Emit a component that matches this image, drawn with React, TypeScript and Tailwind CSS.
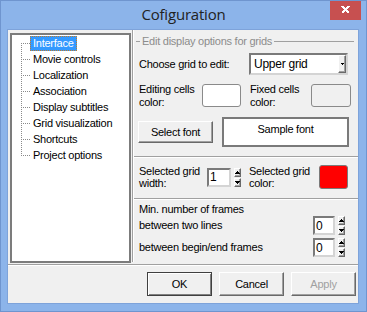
import React from "react";

const FONT = { fontFamily: '"Liberation Sans", Arial, sans-serif' };

const sunken =
  "border-2 border-t-[#7a7a7a] border-l-[#7a7a7a] border-b-[#d4d4d4] border-r-[#d4d4d4] bg-white";

const raised =
  "border border-t-white border-l-white border-b-[#696969] border-r-[#696969] shadow-[inset_-1px_-1px_0_#a0a0a0] bg-[#f0f0f0]";

function Groove() {
  return <div className="h-0 border-t border-b border-t-[#a0a0a0] border-b-white" />;
}

function Arrow({ up }: { up?: boolean }) {
  return (
    <svg width="5" height="3" viewBox="0 0 5 3" shapeRendering="crispEdges">
      {up ? (
        <>
          <rect x="2" y="0" width="1" height="1" fill="#000" />
          <rect x="1" y="1" width="3" height="1" fill="#000" />
          <rect x="0" y="2" width="5" height="1" fill="#000" />
        </>
      ) : (
        <>
          <rect x="0" y="0" width="5" height="1" fill="#000" />
          <rect x="1" y="1" width="3" height="1" fill="#000" />
          <rect x="2" y="2" width="1" height="1" fill="#000" />
        </>
      )}
    </svg>
  );
}

function Spin({ value, w }: { value: string; w: string }) {
  return (
    <div className="flex items-stretch h-[19px] gap-[3px]">
      <div className={`${sunken} ${w} flex items-center pl-[1px] text-[12px] leading-none text-black`}>{value}</div>
      <div className="flex flex-col w-[7px] gap-[1px]">
        <div className={`${raised} flex-1 flex items-center justify-center`}>
          <Arrow up />
        </div>
        <div className={`${raised} flex-1 flex items-center justify-center`}>
          <Arrow />
        </div>
      </div>
    </div>
  );
}

const treeItems = [
  "Interface",
  "Movie controls",
  "Localization",
  "Association",
  "Display subtitles",
  "Grid visualization",
  "Shortcuts",
  "Project options",
];

function TreeLines({ first, last }: { first?: boolean; last?: boolean }) {
  const dots: React.ReactNode[] = [];
  const y0 = first ? 8 : 0;
  const y1 = last ? 8 : 16;
  for (let y = y0; y <= y1; y += 2) {
    if (y < 16) dots.push(<rect key={"v" + y} x="8" y={y} width="1" height="1" fill="#8a8a8a" />);
  }
  for (let x = 10; x <= 16; x += 2) {
    dots.push(<rect key={"h" + x} x={x} y="8" width="1" height="1" fill="#8a8a8a" />);
  }
  return (
    <svg width="17" height="16" viewBox="0 0 17 16" shapeRendering="crispEdges" className="shrink-0">
      {dots}
    </svg>
  );
}

export default function App() {
  return (
    <div
      className="w-[367px] h-[312px] bg-[#8cb4ea] border border-[#6f95cf] flex flex-col text-[11px] tracking-[-0.25px] text-black overflow-hidden"
      style={FONT}
    >
      {/* title bar */}
      <div className="h-[28px] grid grid-cols-[1fr_auto_1fr] shrink-0">
        <div />
        <div
          className="text-[15px] tracking-[-0.2px] text-[#222] pt-[3px] leading-[20px]"
          style={{ fontFamily: '"Open Sans", "Noto Sans", sans-serif' }}
        >
          Cofiguration
        </div>
        <div className="flex justify-end pr-[5px]">
          <div className="w-[31px] h-[20px] -mt-[1px] bg-[#c75050] flex items-center justify-center">
            <svg width="9" height="8" viewBox="0 0 9 8" shapeRendering="crispEdges">
              <path d="M1 0 L8 7 M8 0 L1 7" stroke="#fff" strokeWidth="2" />
            </svg>
          </div>
        </div>
      </div>

      {/* client */}
      <div className="ml-[6px] w-[352px] h-[275px] border border-[#7ea3da] bg-[#f0f0f0] flex flex-col">
        {/* top section */}
        <div className="h-[234px] flex">
          {/* tree */}
          <div className="pl-[2px] pt-[3px]">
            <div className="w-[121px] h-[230px] border-2 border-[#7c7c7c] bg-white flex flex-col">
              {treeItems.map((t, i) => (
                <div key={t} className="h-[16px] flex items-center pl-[1px]">
                  <TreeLines first={i === 0} last={i === treeItems.length - 1} />
                  {i === 0 ? (
                    <div className="h-[15px] bg-[#3399ff] text-white border border-dotted border-[#c07a2a] px-[2px] flex items-center">
                      {t}
                    </div>
                  ) : (
                    <div className="h-[15px] px-[3px] flex items-center">{t}</div>
                  )}
                </div>
              ))}
            </div>
          </div>

          {/* right panel */}
          <div className="ml-[1px] h-[232px] flex-1 border-l-2 border-l-[#a0a0a0] flex flex-col">
            <div className="h-full border-l border-l-white -ml-[1px] flex flex-col">
              {/* header */}
              <div className="mt-[4px] h-[14px] flex items-center pr-[4px]">
                <div className="w-[4px] ml-[2px] h-0 border-t border-t-[#a0a0a0]" />
                <div className="px-[2px] text-[#8c8c8c]">Edit display options for grids</div>
                <div className="flex-1 h-0 border-t border-t-[#a0a0a0]" />
              </div>

              {/* choose grid */}
              <div className="mt-[5px] h-[22px] flex items-center pl-[5px]">
                <div className="w-[110px]">Choose grid to edit:</div>
                <div className={`${sunken} w-[99px] h-[22px] flex items-center justify-between`}>
                  <span className="pl-[3px] text-[12px]">Upper grid</span>
                  <div className={`${raised} w-[8px] h-full flex items-center justify-center`}>
                    <svg width="3" height="2" viewBox="0 0 3 2" shapeRendering="crispEdges">
                      <rect x="0" y="0" width="3" height="1" fill="#000" />
                      <rect x="1" y="1" width="1" height="1" fill="#000" />
                    </svg>
                  </div>
                </div>
              </div>

              {/* cells colour */}
              <div className="mt-[9px] h-[23px] flex items-center pl-[5px]">
                <div className="w-[63px] leading-[13px]">
                  Editing cells
                  <br />
                  color:
                </div>
                <div className="w-[39px] h-[23px] rounded-[3px] border border-[#8a8a8a] bg-white" />
                <div className="ml-[9px] w-[61px] leading-[13px]">
                  Fixed cells
                  <br />
                  color:
                </div>
                <div className="w-[40px] h-[23px] rounded-[3px] border border-[#8a8a8a] bg-[#f0f0f0]" />
              </div>

              {/* font */}
              <div className="mt-[10px] h-[30px] flex items-center pl-[4px]">
                <div className={`${raised} w-[75px] h-[22px] flex items-center justify-center`}>
                  Select font
                </div>
                <div className="ml-[9px] w-[127px] h-[30px] border-2 border-[#7a7a7a] bg-white flex justify-center pt-[2px]">
                  Sample font
                </div>
              </div>

              <div className="mt-[9px]">
                <Groove />
              </div>

              {/* selected grid */}
              <div className="mt-[7px] h-[24px] flex items-center pl-[5px]">
                <div className="w-[68px] leading-[12px]">
                  Selected grid
                  <br />
                  width:
                </div>
                <Spin value="1" w="w-[24px]" />
                <div className="ml-[8px] w-[70px] leading-[12px]">
                  Selected grid
                  <br />
                  color:
                </div>
                <div className="w-[29px] h-[24px] rounded-[3px] border border-[#7a7a7a] bg-[#ff0000]" />
              </div>

              <div className="mt-[9px]">
                <Groove />
              </div>

              {/* min frames */}
              <div className="mt-[3px] h-[13px] pl-[5px] flex items-center">Min. number of frames</div>
              <div className="h-[19px] pl-[5px] pr-[13px] flex items-center justify-between">
                <div>between two lines</div>
                <Spin value="0" w="w-[22px]" />
              </div>
              <div className="mt-[3px] h-[19px] pl-[5px] pr-[13px] flex items-center justify-between">
                <div>between begin/end frames</div>
                <Spin value="0" w="w-[22px]" />
              </div>
            </div>
          </div>
        </div>

        <Groove />

        {/* buttons */}
        <div className="mt-[6px] h-[24px] flex justify-end gap-[7px] pr-[2px]">
          <div className="w-[65px] h-[24px] border border-[#404040] bg-[#f0f0f0] shadow-[inset_1px_1px_0_#fff,inset_-1px_-1px_0_#808080] flex items-center justify-center">
            OK
          </div>
          <div className={`${raised} w-[65px] h-[24px] flex items-center justify-center`}>Cancel</div>
          <div className={`${raised} w-[65px] h-[24px] flex items-center justify-center text-[#a0a0a0]`}>
            Apply
          </div>
        </div>
      </div>
    </div>
  );
}
